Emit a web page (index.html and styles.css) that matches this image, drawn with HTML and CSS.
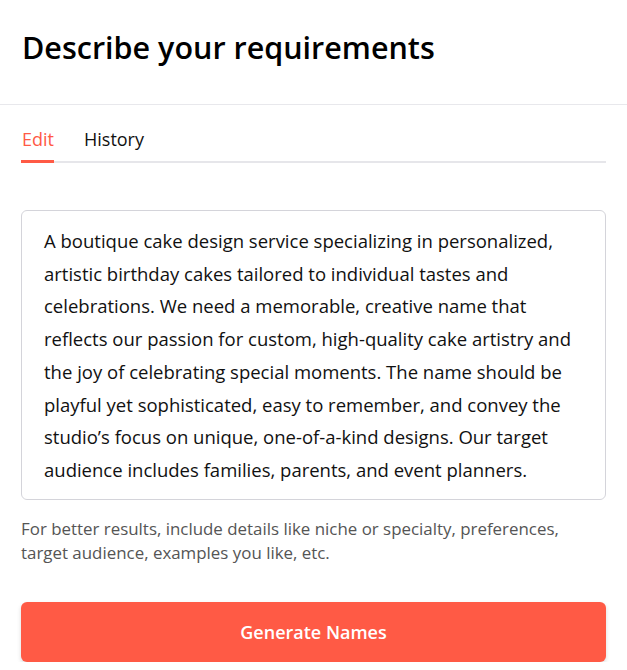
FILE: index.html
```html
<!DOCTYPE html>
<html lang="en">
  <head>
    <meta charset="UTF-8" />
    <meta name="viewport" content="width=device-width, initial-scale=1.0" />
    <title>Describe your requirements</title>
    <link rel="stylesheet" href="styles.css">
  </head>
  <body>
    <header class="panel-header">
      <h1>Describe your requirements</h1>
    </header>

    <main class="panel-body">
      <nav class="tabs">
        <button class="tab active" type="button">Edit</button>
        <button class="tab" type="button">History</button>
      </nav>

      <form id="requirementsForm">
        <textarea id="requirements" class="requirements">A boutique cake design service specializing in personalized, artistic birthday cakes tailored to individual tastes and celebrations. We need a memorable, creative name that reflects our passion for custom, high-quality cake artistry and the joy of celebrating special moments. The name should be playful yet sophisticated, easy to remember, and convey the studio’s focus on unique, one-of-a-kind designs. Our target audience includes families, parents, and event planners.</textarea>
        <p class="hint">
          For better results, include details like niche or specialty, preferences,
          target audience, examples you like, etc.
        </p>
        <button type="submit" class="generate">Generate Names</button>
      </form>
    </main>
  </body>
</html>
```

FILE: styles.css
```css
* {
  box-sizing: border-box;
}
body {
  margin: 0;
  font-family: "Open Sans", "Noto Sans", sans-serif;
  color: #111;
  background-color: #fff;
}
.panel-header {
  height: 105px;
  padding: 0 22px 10px;
  display: flex;
  align-items: center;
  border-bottom: 1px solid #e8e8ec;
}
h1 {
  margin: 0;
  font-size: 30.5px;
  font-weight: 600;
  color: #000;
}
.panel-body {
  padding: 22px 21px 0;
}
.tabs {
  display: flex;
  gap: 30px;
  border-bottom: 2px solid #e6e6ea;
  margin-bottom: 47px;
  padding-left: 1px;
}
.tab {
  background: none;
  border: none;
  padding: 0 0 10px;
  font-family: inherit;
  font-size: 18px;
  color: #111;
  position: relative;
  cursor: pointer;
}
.tab.active {
  color: #ff5a45;
}
.tab.active::after {
  content: "";
  position: absolute;
  left: -1px;
  right: 0;
  bottom: -2px;
  height: 3px;
  background-color: #ff5a45;
}
.requirements {
  display: block;
  width: 100%;
  height: 290px;
  padding: 14px 22px;
  border: 1px solid #d4d4da;
  border-radius: 6px;
  font-family: inherit;
  font-size: 18.5px;
  line-height: 32.7px;
  color: #111;
  resize: none;
  overflow: hidden;
}
.hint {
  max-width: 560px;
  margin: 17px 0 0;
  font-size: 16.9px;
  line-height: 24px;
  color: #555;
}
.generate {
  display: block;
  width: 100%;
  height: 60px;
  margin-top: 37px;
  background-color: #ff5a45;
  color: #fff;
  border: none;
  border-radius: 6px;
  font-family: inherit;
  font-size: 18px;
  font-weight: 600;
  box-shadow: 0 2px 4px rgba(0, 0, 0, 0.15);
  cursor: pointer;
}
```
